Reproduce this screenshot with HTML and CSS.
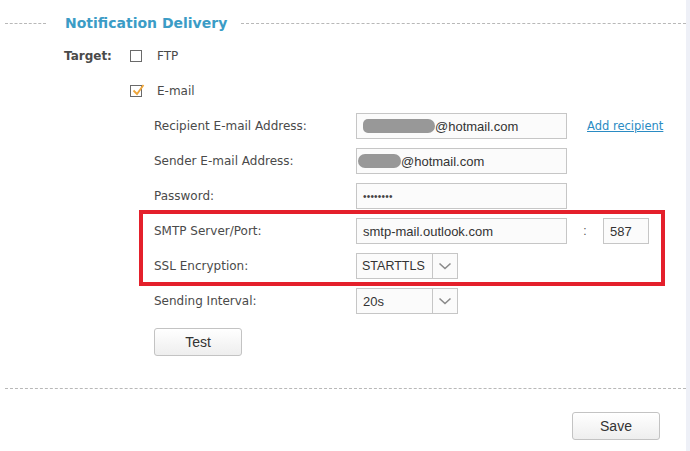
FILE: index.html
```html
<!DOCTYPE html>
<html>
<head>
<meta charset="utf-8">
<link rel="stylesheet" href="styles.css">
</head>
<body>
<div class="page">
  <div class="section-head">
    <span class="dash dash-left"></span>
    <h2 class="title">Notification Delivery</h2>
    <span class="dash dash-right"></span>
  </div>

  <div class="target-row">
    <span class="target-label">Target:</span>
    <div class="check-group">
      <label class="check">
        <span class="box"></span><span class="check-text">FTP</span>
      </label>
      <label class="check">
        <span class="box checked">
          <svg width="16" height="16" viewBox="0 0 16 16"><path d="M3.5 8.5 L7 12 L13.5 3" fill="none" stroke="#eea53a" stroke-width="1.8"/></svg>
        </span><span class="check-text">E-mail</span>
      </label>
    </div>
  </div>

  <div class="fields">
    <div class="row">
      <span class="label">Recipient E-mail Address:</span>
      <div class="input"><span class="blur blur-a"></span>@hotmail.com</div>
      <a class="link" href="#">Add recipient</a>
    </div>
    <div class="row">
      <span class="label">Sender E-mail Address:</span>
      <div class="input input-flush"><span class="blur blur-b"></span>@hotmail.com</div>
    </div>
    <div class="row">
      <span class="label">Password:</span>
      <div class="input"><span class="dots">••••••••</span></div>
    </div>
    <div class="highlight">
      <div class="row">
        <span class="label">SMTP Server/Port:</span>
        <div class="input">smtp-mail.outlook.com</div>
        <span class="colon">:</span>
        <div class="input port">587</div>
      </div>
      <div class="row">
        <span class="label">SSL Encryption:</span>
        <div class="select">
          <span class="select-value caps">STARTTLS</span>
          <span class="select-arrow"><svg width="14" height="8" viewBox="0 0 14 8"><path d="M1.5 1.5 L7 6.5 L12.5 1.5" fill="none" stroke="#8a8a8a" stroke-width="1.6"/></svg></span>
        </div>
      </div>
    </div>
    <div class="row">
      <span class="label">Sending Interval:</span>
      <div class="select">
        <span class="select-value">20s</span>
        <span class="select-arrow"><svg width="14" height="8" viewBox="0 0 14 8"><path d="M1.5 1.5 L7 6.5 L12.5 1.5" fill="none" stroke="#8a8a8a" stroke-width="1.6"/></svg></span>
      </div>
    </div>
    <div class="btn-row">
      <button class="btn">Test</button>
    </div>
  </div>

  <div class="divider"></div>

  <div class="footer">
    <button class="btn">Save</button>
  </div>
</div>
</body>
</html>
```

FILE: styles.css
```css
html, body {
  margin: 0;
  padding: 0;
  background: #ffffff;
}
body {
  width: 690px;
  height: 451px;
  overflow: hidden;
  display: flex;
}
.page {
  width: 686px;
  height: 451px;
  border-right: 4px solid #eef0f7;
  font-family: "DejaVu Sans", Verdana, sans-serif;
  font-size: 12px;
  color: #4a4a4a;
}
.section-head {
  display: flex;
  align-items: center;
  padding: 13px 0 0 5px;
  height: 20px;
}
.dash {
  height: 0;
  border-top: 1px dashed #b8b8b8;
}
.dash-left { width: 41px; }
.dash-right { flex: 1; }
.title {
  margin: 0 14px 0 19px;
  font-size: 14px;
  font-weight: bold;
  color: #3b9cc6;
}
.target-row {
  display: flex;
  padding: 17px 0 0 64px;
}
.target-label {
  width: 66px;
  font-weight: bold;
  line-height: 12px;
}
.check-group {
  display: flex;
  flex-direction: column;
  gap: 23px;
}
.check {
  display: flex;
  align-items: center;
  height: 12px;
}
.box {
  width: 10px;
  height: 10px;
  border: 1px solid #6a6a6a;
  position: relative;
  margin-right: 15px;
}
.box svg {
  position: absolute;
  left: -1px;
  top: -4px;
}
.check-text {
  color: #4a4a4a;
}
.fields {
  display: flex;
  flex-direction: column;
  gap: 9px;
  padding: 16px 0 0 154px;
}
.row {
  display: flex;
  align-items: center;
  height: 26px;
}
.label {
  width: 202px;
  flex: none;
}
.input {
  width: 203px;
  height: 24px;
  border: 1px solid #c6c6c6;
  background: #fbfbfb;
  padding-left: 6px;
  display: flex;
  align-items: center;
  font-family: "Liberation Sans", Arial, sans-serif;
  font-size: 13px;
  color: #333;
}
.input-flush { padding-left: 1px; width: 208px; }
.blur {
  display: inline-block;
  height: 14px;
  background: #8d8d8d;
  border-radius: 7px;
  opacity: 0.9;
}
.blur-a { width: 72px; border-radius: 5px 7px 7px 5px; }
.blur-b { width: 43px; border-radius: 8px; }
.dots {
  font-size: 10px;
  letter-spacing: 0.2px;
  color: #444;
}
.link {
  margin-left: 20px;
  color: #2a8bc3;
  text-decoration: underline;
  font-size: 11.5px;
}
.colon {
  width: 36px;
  text-align: center;
  color: #555;
  font-family: "Liberation Sans", Arial, sans-serif;
}
.port {
  width: 38px;
}
.highlight {
  display: flex;
  flex-direction: column;
  gap: 9px;
  box-sizing: border-box;
  width: 526px;
  margin: -8px 0 -7px -15px;
  padding: 4px 0 3px 11px;
  border: 4px solid #e4202b;
}
.select {
  width: 100px;
  height: 24px;
  border: 1px solid #c6c6c6;
  background: #fbfbfb;
  display: flex;
  font-family: "Liberation Sans", Arial, sans-serif;
  font-size: 13px;
  color: #333;
}
.select-value {
  width: 69px;
  padding-left: 6px;
  display: flex;
  align-items: center;
  border-right: 1px solid #c6c6c6;
}
.caps { padding-left: 5px; width: 70px; font-size: 12.5px; }
.select-arrow {
  flex: 1;
  display: flex;
  align-items: center;
  justify-content: center;
}
.btn-row {
  padding-top: 5px;
}
.btn {
  width: 88px;
  height: 28px;
  border: 1px solid #c3c3c3;
  border-radius: 3px;
  background: linear-gradient(#ffffff, #eeeeee);
  font-family: "Liberation Sans", Arial, sans-serif;
  font-size: 14px;
  color: #333;
  padding: 0;
}
.divider {
  margin: 32px 0 0 5px;
  border-top: 1px dashed #b8b8b8;
}
.footer {
  display: flex;
  justify-content: flex-end;
  padding: 23px 26px 0 0;
}
```
